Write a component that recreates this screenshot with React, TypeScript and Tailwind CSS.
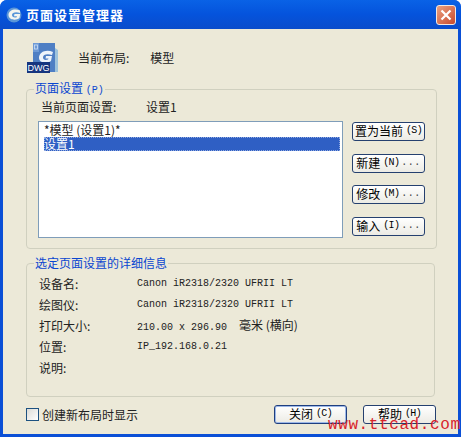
import React from 'react';

const cjk = { fontFamily: '"Noto Sans CJK SC", "Liberation Sans", sans-serif' };

function XpButton({ label, accel, dots, focused }: { label: string; accel: string; dots?: boolean; focused?: boolean }) {
  return (
    <button
      type="button"
      className={`flex h-[19px] w-[73px] items-center justify-center whitespace-nowrap rounded-[3px] border bg-gradient-to-b from-white to-[#ecebe4] pb-[1px] text-[12px] leading-none text-black ${
        focused ? 'border-[#1f3f7f] shadow-[inset_0_0_0_1px_#9db8e8]' : 'border-[#25406f]'
      }`}
    >
      {label}
      <span className="ml-[3px] font-['Liberation_Mono'] text-[10px] tracking-[-0.7px]">({accel})</span>
      {dots && <span className="ml-[2px] font-['Liberation_Mono'] text-[10px] tracking-[0.5px] text-[#444]">...</span>}
    </button>
  );
}

function DetailRow({ label, children }: { label: string; children?: React.ReactNode }) {
  return (
    <div className="flex h-[21px] items-center">
      <div className="w-[98px] shrink-0 text-[12px] text-[#222]">{label}</div>
      <div className="whitespace-nowrap font-['Liberation_Mono','Noto_Sans_CJK_SC',monospace] text-[10px] text-[#222]">{children}</div>
    </div>
  );
}

function GcadIcon() {
  return (
    <svg width="32" height="32" viewBox="0 0 32 32" className="shrink-0">
      <rect x="6" y="0" width="22" height="29" fill="#4f7fc4" />
      <path d="M28 5 L31 7 V29 H28 Z" fill="#9ec3dc" />
      <rect x="6" y="0" width="6" height="9" fill="#6e9ad6" />
      <rect x="7.5" y="2" width="3" height="4" fill="none" stroke="#cfe0f5" strokeWidth="0.8" />
      <path d="M26 9 C19 6 12 9 12 15 C12 20 20 21 24 18 L25 13 H19 L18.5 15.5 H21.5 L21 16.6 C18 17.6 16 16.6 16 14.5 C16 11.5 20 10.5 25 12 Z" fill="#eef4fb" />
      <rect x="0" y="19" width="23" height="11" fill="#16357f" />
      <text x="11.5" y="28" textAnchor="middle" fontSize="9" fill="#fff" fontFamily="Liberation Sans, sans-serif">DWG</text>
    </svg>
  );
}

export default function App() {
  return (
    <div
      className="relative flex h-[437px] w-[461px] flex-col overflow-hidden rounded-t-[7px] bg-[#0a4fd6] text-black"
      style={cjk}
    >
      {/* title bar */}
      <div className="flex h-[29px] shrink-0 items-center bg-gradient-to-b from-[#0a62e6] via-[#0553dc] to-[#0a4ccb] pl-[6px] pr-[5px]">
        <div className="flex h-4 w-4 items-center justify-center">
          <svg width="16" height="16" viewBox="0 0 16 16">
            <circle cx="8" cy="8" r="7.5" fill="#5a96d8" />
            <path d="M14 3.5 C9 1 2.5 3 2.5 8 C2.5 13 10 14 13.5 11 L14.2 7 H8.5 L8 9.3 H11 L10.7 10.2 C8 11 6 10 6 8 C6 5.5 10 4.5 14 6 Z" fill="#f4f4f0" />
          </svg>
        </div>
        <div className="ml-[4px] flex-1 text-[13px] font-bold tracking-[1px] text-white">页面设置管理器</div>
        <div className="flex h-[20px] w-[20px] items-center justify-center rounded-[3px] border border-[#f4e8e0] bg-gradient-to-br from-[#e9a080] to-[#c9482a]">
          <svg width="12" height="12" viewBox="0 0 12 12">
            <path d="M1.5 1.5 L10.5 10.5 M10.5 1.5 L1.5 10.5" stroke="#fff" strokeWidth="2.2" />
          </svg>
        </div>
      </div>

      {/* dialog body */}
      <div className="mx-[3px] mb-[3px] flex flex-1 flex-col bg-[#ece9d8] px-[23px]">
        <div className="mt-[14px] flex h-[31px] items-start">
          <div className="ml-[1px]"><GcadIcon /></div>
          <div className="ml-[19px] mt-[6px] text-[12px] text-[#222]">当前布局:</div>
          <div className="ml-[21px] mt-[6px] text-[12px] text-[#222]">模型</div>
        </div>

        <fieldset className="mt-[6px] h-[169px] rounded-[4px] border border-[#d0d0bf] px-[11px]">
          <legend className="-ml-[4px] px-[1px] text-[12px] leading-[16px] text-[#0a46d0]">
            页面设置 <span className="font-['Liberation_Mono'] text-[10px]">(P)</span>
          </legend>
          <div className="flex h-[16px] items-center pl-[3px] text-[12px] text-[#222]">
            <span className="w-[105px]">当前页面设置:</span>
            <span>设置1</span>
          </div>
          <div className="mt-[6px] flex items-start">
            <div className="h-[117px] w-[305px] border border-[#7f9db9] bg-white pl-[5px] pt-[1px] text-[12px] leading-[14px]">
              <div className="h-[14px] whitespace-nowrap text-[#222]">*模型 (设置1)*</div>
              <div className="h-[14px] w-[296px] bg-[#2f5fc4] text-white outline-1 -outline-offset-1 outline-dotted outline-[#8fa8e0]">设置1</div>
            </div>
            <div className="ml-[9px] flex flex-col gap-[12.67px] pt-[1px]">
              <XpButton label="置为当前" accel="S" />
              <XpButton label="新建" accel="N" dots />
              <XpButton label="修改" accel="M" dots />
              <XpButton label="输入" accel="I" dots />
            </div>
          </div>
        </fieldset>

        <fieldset className="mt-[6px] h-[142px] rounded-[4px] border border-[#d0d0bf] px-[12px]">
          <legend className="-ml-[5px] px-[1px] text-[12px] leading-[16px] text-[#0a46d0]">选定页面设置的详细信息</legend>
          <div className="pt-[2px]">
            <DetailRow label="设备名:">Canon iR2318/2320 UFRII LT</DetailRow>
            <DetailRow label="绘图仪:">Canon iR2318/2320 UFRII LT</DetailRow>
            <DetailRow label="打印大小:">
              210.00 x 296.90 <span className="ml-[6px] text-[12px]" style={cjk}>毫米 (横向)</span>
            </DetailRow>
            <DetailRow label="位置:">IP_192.168.0.21</DetailRow>
            <DetailRow label="说明:" />
          </div>
        </fieldset>

        <div className="mt-[8px] flex items-center">
          <div className="h-[13px] w-[13px] border border-[#1c5180] bg-gradient-to-br from-[#dcdcd7] to-white" />
          <div className="ml-[3px] text-[12px] text-[#222]">创建新布局时显示</div>
          <div className="-mr-[1px] ml-auto flex gap-[16px]">
            <XpButton label="关闭" accel="C" focused />
            <XpButton label="帮助" accel="H" />
          </div>
        </div>
      </div>

      {/* watermark over the dialog */}
      <div className="absolute left-[328px] top-[416px] font-['Liberation_Mono'] text-[16px] leading-[18px] tracking-[0.6px] text-[#d8222a]">
        www.ttcad.com
      </div>
    </div>
  );
}
